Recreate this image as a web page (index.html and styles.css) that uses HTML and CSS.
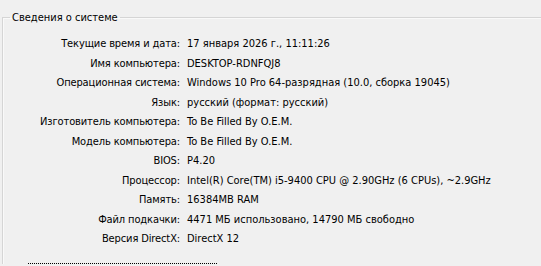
FILE: index.html
```html
<!DOCTYPE html>
<html lang="ru">
<head>
<meta charset="utf-8">
<title>Сведения о системе</title>
<link rel="stylesheet" href="styles.css">
</head>
<body>
<fieldset class="group">
  <legend class="group-title">Сведения о системе</legend>
  <div class="rows">
    <div class="label">Текущие время и дата:</div><div class="value">17 января 2026 г., 11:11:26</div>
    <div class="label">Имя компьютера:</div><div class="value">DESKTOP-RDNFQJ8</div>
    <div class="label">Операционная система:</div><div class="value">Windows 10 Pro 64-разрядная (10.0, сборка 19045)</div>
    <div class="label">Язык:</div><div class="value">русский (формат: русский)</div>
    <div class="label">Изготовитель компьютера:</div><div class="value">To Be Filled By O.E.M.</div>
    <div class="label">Модель компьютера:</div><div class="value">To Be Filled By O.E.M.</div>
    <div class="label">BIOS:</div><div class="value">P4.20</div>
    <div class="label">Процессор:</div><div class="value">Intel(R) Core(TM) i5-9400 CPU @ 2.90GHz (6 CPUs), ~2.9GHz</div>
    <div class="label">Память:</div><div class="value">16384MB RAM</div>
    <div class="label">Файл подкачки:</div><div class="value">4471 МБ использовано, 14790 МБ свободно</div>
    <div class="label">Версия DirectX:</div><div class="value">DirectX 12</div>
  </div>
  <div class="focus-rect"></div>
</fieldset>
</body>
</html>
```

FILE: styles.css
```css
html, body {
  margin: 0;
  padding: 0;
  background: #f0f0f0;
  overflow: hidden;
}

body {
  font-family: "DejaVu Sans Condensed", Tahoma, "Liberation Sans", sans-serif;
  font-size: 11px;
  color: #000;
  width: 541px;
  height: 266px;
}

.group {
  margin: 11px -20px 0 2px;
  padding: 0;
  border: 1px solid #d5d5d5;
  border-right: none;
  border-bottom: none;
  box-shadow: inset 1px 1px 0 #f9f9f9;
  min-width: 0;
}

.group-title {
  margin-left: 7px;
  padding: 0 2px;
  line-height: 13px;
  white-space: nowrap;
}

.rows {
  display: grid;
  grid-template-columns: 177px 1fr;
  grid-auto-rows: 19.5px;
  column-gap: 7px;
  padding-top: 13px;
  line-height: 13px;
  white-space: nowrap;
}

.label {
  text-align: right;
  letter-spacing: -0.12px;
}

.focus-rect {
  margin: 11px 0 0 25px;
  width: 190px;
  height: 1px;
  background: repeating-linear-gradient(to right, #000 0 1px, transparent 1px 2px);
}
```
